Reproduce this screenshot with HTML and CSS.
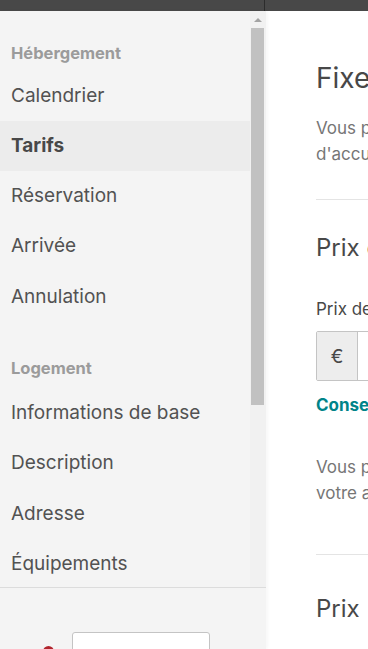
FILE: index.html
```html
<!DOCTYPE html>
<html lang="fr">
<head>
    <meta charset="UTF-8">
    <meta name="viewport" content="width=device-width, initial-scale=1.0">
    <title>Tarifs</title>
    <link rel="stylesheet" href="styles.css">
</head>
<body>

    <header class="topbar">
        <div class="topbar-left"></div>
        <div class="topbar-right"></div>
    </header>

    <div class="layout">
        <aside class="sidebar">
            <div class="nav-wrap">
                <nav class="nav">
                    <div class="nav-group">
                        <h4 class="nav-title">Hébergement</h4>
                        <a class="nav-item" href="#">Calendrier</a>
                        <a class="nav-item active" href="#">Tarifs</a>
                        <a class="nav-item" href="#">Réservation</a>
                        <a class="nav-item" href="#">Arrivée</a>
                        <a class="nav-item" href="#">Annulation</a>
                    </div>
                    <div class="nav-group">
                        <h4 class="nav-title">Logement</h4>
                        <a class="nav-item" href="#">Informations de base</a>
                        <a class="nav-item" href="#">Description</a>
                        <a class="nav-item" href="#">Adresse</a>
                        <a class="nav-item" href="#">Équipements</a>
                        <a class="nav-item" href="#">Photos</a>
                    </div>
                </nav>
                <div class="scrollbar">
                    <div class="scroll-up"><span class="arrow"></span></div>
                    <div class="scroll-thumb"></div>
                </div>
            </div>
            <div class="sidebar-footer">
                <span class="dot"></span>
                <div class="select-box"></div>
            </div>
        </aside>

        <main class="content">
            <div class="content-inner">
                <h1>Fixez vos prix</h1>
                <p class="muted">Vous pouvez modifier vos prix à tout moment selon votre style<br>d'accueil et la demande dans votre quartier.</p>

                <hr>

                <h2>Prix de base</h2>
                <label class="field-label" for="prixBase">Prix de base par nuit</label>
                <div class="input-group">
                    <span class="addon">€</span>
                    <input type="text" id="prixBase">
                </div>
                <a class="tip" href="#">Conseils sur les prix</a>
                <p class="muted second">Vous pouvez ajuster ce prix à tout moment. Il s'agit du tarif par défaut de<br>votre annonce pour chaque nuit.</p>

                <hr class="wide">

                <h2>Prix</h2>
            </div>
        </main>
    </div>

</body>
</html>
```

FILE: styles.css
```css
* {
    box-sizing: border-box;
}
html, body {
    margin: 0;
    height: 100%;
    overflow: hidden;
}
body {
    font-family: Inter, "Noto Sans", Arial, sans-serif;
    color: #484848;
    background-color: #fff;
}
.topbar {
    display: flex;
    height: 11px;
    background-color: #484848;
}
.topbar-left {
    width: 265px;
    border-right: 1px solid #2c2c2c;
}
.topbar-right {
    flex: 1;
}
.layout {
    display: flex;
    height: calc(100% - 11px);
}
.sidebar {
    width: 266px;
    flex-shrink: 0;
    display: flex;
    flex-direction: column;
    background-color: #f4f4f4;
    box-shadow: 2px 0 3px rgba(0, 0, 0, 0.03);
}
.nav-wrap {
    display: flex;
    height: 576px;
}
.nav {
    flex: 1;
    overflow: hidden;
}
.nav-title {
    margin: 32px 0 7.5px;
    padding: 0 11px;
    font-size: 16.5px;
    line-height: 20px;
    font-weight: 700;
    color: #9b9b9b;
}
.nav-group + .nav-group .nav-title {
    margin-top: 36px;
    margin-bottom: 10px;
}
.nav-item {
    display: block;
    padding: 0 11px;
    line-height: 50.3px;
    font-size: 19px;
    color: #525252;
    text-decoration: none;
}
.nav-item.active {
    font-weight: 700;
    color: #484848;
    background-color: #ececec;
}
.scrollbar {
    width: 16px;
    background-color: #f1f1f1;
}
.scroll-up {
    height: 17px;
    display: flex;
    align-items: center;
    justify-content: center;
    padding-right: 1px;
}
.arrow {
    width: 0;
    height: 0;
    border-left: 4px solid transparent;
    border-right: 4px solid transparent;
    border-bottom: 4px solid #a3a3a3;
}
.scroll-thumb {
    width: 13px;
    height: 377px;
    margin-left: 1px;
    background-color: #c1c1c1;
}
.sidebar-footer {
    flex: 1;
    display: flex;
    align-items: flex-start;
    padding: 44px 0 0 43px;
    border-top: 1px solid #dcdcdc;
}
.dot {
    width: 11px;
    height: 11px;
    margin-top: 14px;
    border-radius: 50%;
    background-color: #b0252d;
}
.select-box {
    width: 138px;
    height: 40px;
    margin-left: 18px;
    background-color: #fff;
    border: 1px solid #c4c4c4;
    border-radius: 3px;
}
.content {
    flex: 1;
    min-width: 0;
    overflow: hidden;
    padding: 49px 0 0 50px;
}
.content-inner {
    width: 700px;
}
h1 {
    margin: 0;
    font-size: 28px;
    line-height: 36px;
    font-weight: 400;
}
h2 {
    margin: 0;
    font-size: 24px;
    line-height: 32px;
    font-weight: 400;
}
.muted {
    margin: 19px 0 0;
    font-size: 17px;
    line-height: 26px;
    color: #767676;
}
.muted.second {
    margin-top: 36px;
}
hr {
    margin: 32px 0;
    border: 0;
    border-top: 1px solid #e4e4e4;
}
hr.wide {
    margin-top: 48px;
    margin-bottom: 38px;
}
.field-label {
    display: block;
    margin-top: 32px;
    font-size: 17px;
    line-height: 26px;
}
.input-group {
    display: flex;
    height: 50px;
    margin-top: 9px;
    border: 1px solid #c4c4c4;
    border-radius: 2px;
    width: 400px;
}
.addon {
    width: 41px;
    display: flex;
    align-items: center;
    justify-content: center;
    background-color: #ededed;
    border-right: 1px solid #c4c4c4;
    font-size: 19px;
}
.input-group input {
    flex: 1;
    border: 0;
    font-size: 17px;
    padding: 0 10px;
}
.tip {
    display: block;
    margin-top: 11px;
    font-size: 17px;
    line-height: 26px;
    font-weight: 700;
    color: #008489;
    text-decoration: none;
}
```
